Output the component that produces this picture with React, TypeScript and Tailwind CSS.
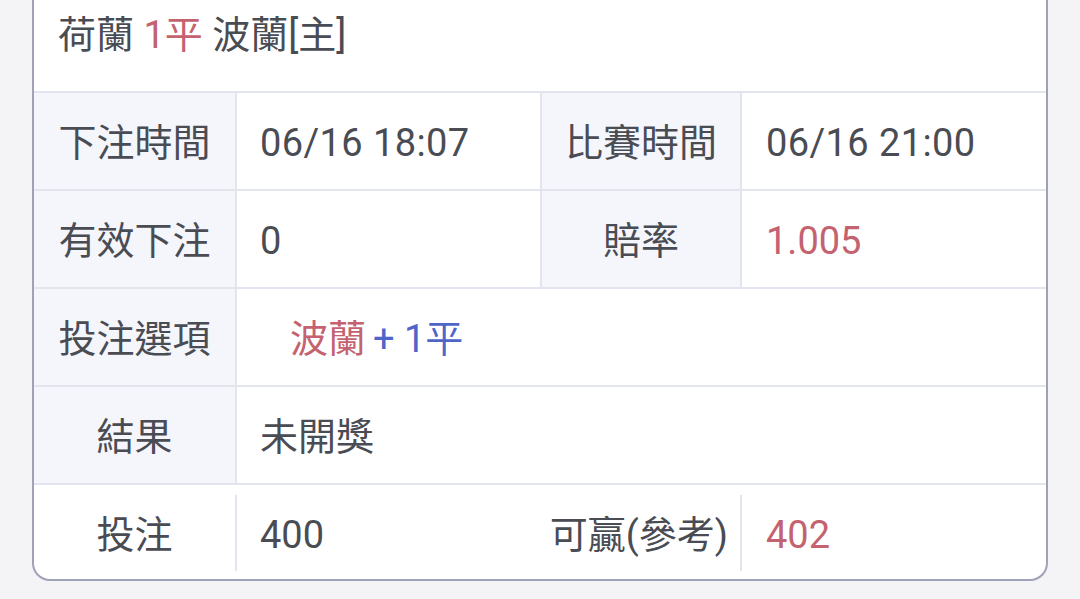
import React from 'react'

const font = { fontFamily: '"Roboto", "Noto Sans CJK TC", sans-serif' }

function Label({ children }: { children: React.ReactNode }) {
  return (
    <div className="flex items-center justify-center bg-[#f5f6fb] border-r-2 border-[#e3e5ee] pt-[4px]">
      {children}
    </div>
  )
}

export default function App() {
  return (
    <div className="min-h-screen bg-[#f4f4f6] text-[38px] text-[#4a4c54]" style={font}>
      <div className="ml-[32px] w-[1016px] bg-white border-2 border-t-0 border-[#9fa1b8] rounded-b-[18px] overflow-hidden">
        <div className="h-[93px] border-b-2 border-[#e3e5ee] pl-[24px] pt-[12px] leading-[46px]">
          荷蘭 <span className="text-[#c4626f]">1平</span> 波蘭[主]
        </div>

        <div className="grid grid-cols-[203px_305px_200px_1fr] h-[98px] border-b-2 border-[#e3e5ee]">
          <Label>下注時間</Label>
          <div className="flex items-center pt-[4px] pl-[23px] border-r-2 border-[#e3e5ee] tracking-[0.4px]">06/16 18:07</div>
          <Label>比賽時間</Label>
          <div className="flex items-center pt-[4px] pl-[24px] tracking-[0.4px]">06/16 21:00</div>
        </div>

        <div className="grid grid-cols-[203px_305px_200px_1fr] h-[98px] border-b-2 border-[#e3e5ee]">
          <Label>有效下注</Label>
          <div className="flex items-center pt-[4px] pl-[23px] border-r-2 border-[#e3e5ee]">0</div>
          <Label>賠率</Label>
          <div className="flex items-center pt-[4px] pl-[24px] text-[#c4626f]">1.005</div>
        </div>

        <div className="grid grid-cols-[203px_1fr] h-[98px] border-b-2 border-[#e3e5ee]">
          <Label>投注選項</Label>
          <div className="flex items-center pt-[4px] pl-[53px]">
            <span className="text-[#c4626f]">波蘭</span>
            <span className="text-[#4f66c9] ml-[7px]">+ 1平</span>
          </div>
        </div>

        <div className="grid grid-cols-[203px_1fr] h-[98px] border-b-2 border-[#e3e5ee]">
          <Label>結果</Label>
          <div className="flex items-center pt-[4px] pl-[23px]">未開獎</div>
        </div>

        <div className="grid grid-cols-[201px_2px_303px_200px_2px_1fr] h-[94px] items-center pt-[2px]">
          <div className="flex justify-center pt-[4px]">投注</div>
          <div className="h-[76px] bg-[#e3e5ee]" />
          <div className="pl-[23px] pt-[4px]">400</div>
          <div className="flex justify-end pr-[12px] pt-[4px]">可贏(參考)</div>
          <div className="h-[76px] bg-[#e3e5ee]" />
          <div className="pl-[24px] pt-[4px] text-[#c4626f]">402</div>
        </div>
      </div>
    </div>
  )
}
